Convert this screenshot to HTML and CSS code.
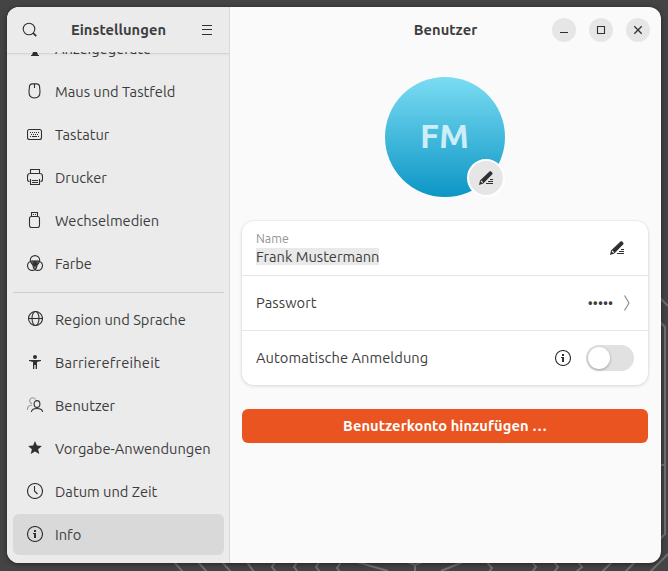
FILE: index.html
```html
<!DOCTYPE html>
<html lang="de">
<head>
<meta charset="utf-8">
<title>Einstellungen</title>
<link rel="stylesheet" href="styles.css">
</head>
<body>
<svg class="wallpaper" viewBox="0 0 668 571"><path d="M174 562l9 10M198 562l9 10M222 562l9 10M247 562l7 10M275 562l-3 5 4 5M297 562l-3 5 4 5M319 562l-3 5 4 5M341 562l-4 6 3 4M357 562l31 9M407 562l8 3 8-3M415 565v7M463 562l-22 9M487 562l5 6-3 4M532 562l4 5-4 5M554 562l4 5-4 5M578 562l4 5-6 5M612 562l-10 10M635 562l-10 10M668 554l-18 18M660 298l8 8M660 322l5 5v207l-5 5M660 465h5"/></svg>
<div class="window">
  <aside class="sidebar">
    <header class="side-header">
      <svg class="icon" viewBox="0 0 16 16"><circle cx="7" cy="7" r="5.8"/><path d="M11.2 11.2l3 3" stroke-width="1.7"/></svg>
      <h1 class="title">Einstellungen</h1>
      <svg class="icon menu" viewBox="0 0 16 16"><path d="M3 3.500h10M3 7.500h10M3 12.500h10"/></svg>
    </header>
    <nav class="list">
      <a class="row"><svg class="icon" viewBox="0 0 16 16"><rect x="1" y="1" width="14" height="9"/><path class="fill" d="M6 12h4l1 3h1v1H4v-1h1z"/></svg><span>Anzeigegeräte</span></a>
      <a class="row"><svg class="icon" viewBox="0 0 16 16"><path d="M5.200.9h4.600Q12 .9 12.500 3.200L13 8.500Q13.200 15 7.500 15T2 8.500L2.500 3.200Q3 .9 5.200 .9zM7.500 1v4"/></svg><span>Maus und Tastfeld</span></a>
      <a class="row"><svg class="icon" viewBox="0 0 16 16"><rect x=".5" y="3.500" width="14" height="10" rx="2"/><path class="dotted" d="M3 6.500h10M4 8.500h8"/><path d="M3 10.500h1M5 10.500h5M11 10.500h1"/></svg><span>Tastatur</span></a>
      <a class="row"><svg class="icon" viewBox="0 0 16 16"><path d="M3.500 4.500v-4h9v4M2.500 12.500Q.5 12.500 .5 10.500v-3Q.5 4.500 3 4.500h10q2.500 0 2.500 3v3q0 2-2 2M3.500 10v5.500h9V10M5 11.500h6M5 13.500h6"/></svg><span>Drucker</span></a>
      <a class="row"><svg class="icon" viewBox="0 0 16 16"><rect x="2.500" y="4.500" width="10" height="11" rx="2"/><path d="M4.500 4V.5h6V4M6 2.500h1M8 2.500h1"/></svg><span>Wechselmedien</span></a>
      <a class="row"><svg class="icon" viewBox="0 0 16 16"><path class="fill mid" d="M3.500 6Q8 4 12.500 6L11 10 8 14 5 10z"/><path class="fill" d="M5 7.500h6L8 12z"/><circle cx="8" cy="5.300" r="4.700"/><circle cx="5.200" cy="10.700" r="4.700"/><circle cx="10.800" cy="10.700" r="4.700"/></svg><span>Farbe</span></a>
      <hr class="separator">
      <a class="row"><svg class="icon" viewBox="0 0 16 16"><circle cx="8.500" cy="7.500" r="7"/><ellipse cx="8.500" cy="7.500" rx="3.500" ry="7"/><path d="M1 7.500h15"/></svg><span>Region und Sprache</span></a>
      <a class="row"><svg class="icon" viewBox="0 0 16 16"><path class="fill" d="M2 6h12v1l-4 1v7H8.700v-4H7.300v4H6V8L2 7z"/><circle class="fill" cx="8" cy="3" r="2"/></svg><span class="wide">Barrierefreiheit</span></a>
      <a class="row"><svg class="icon" viewBox="0 0 16 16"><g class="faint"><path d="M8.500 2.500A3 3 0 1 0 5 6.600M.5 13v-1.500Q1 8.500 5 8"/></g><ellipse cx="10" cy="7" rx="2.900" ry="3.400"/><path d="M4.500 15v-.5Q5 11.500 10 11.500t5.500 3V15"/></svg><span>Benutzer</span></a>
      <a class="row"><svg class="icon" viewBox="0 0 16 16"><path class="fill" d="M8 1l1.900 4.600 5 .4-3.800 3.200L12.300 14 8 11.400 3.700 14l1.200-4.800L1.100 6l5-.4z"/></svg><span>Vorgabe-Anwendungen</span></a>
      <a class="row"><svg class="icon" viewBox="0 0 16 16"><circle cx="8" cy="8" r="7.500"/><path d="M7.500 3v5l3 3"/></svg><span>Datum und Zeit</span></a>
      <a class="row selected"><svg class="icon" viewBox="0 0 16 16"><circle cx="8" cy="8" r="7.500"/><path class="fill" d="M7 4h2v2H7zM6 7h3v5H7V8H6z"/></svg><span>Info</span></a>
    </nav>
  </aside>
  <main class="content">
    <header class="main-header">
      <h2 class="title">Benutzer</h2>
      <div class="controls">
        <button class="control"><svg class="icon" viewBox="0 0 16 16"><path d="M4 10.500h8"/></svg></button>
        <button class="control"><svg class="icon" viewBox="0 0 16 16"><path d="M4.500 4.500h7v7h-7z"/></svg></button>
        <button class="control"><svg class="icon" viewBox="0 0 16 16"><path d="M4.300 4.300l7.400 7.400M11.700 4.300l-7.400 7.400" stroke-width="1.300"/></svg></button>
      </div>
    </header>
    <div class="avatar"><span class="initials">FM</span>
      <button class="avatar-edit"><svg class="icon" viewBox="0 0 16 16"><path class="fill" d="M1 15l1-4.500L11.500 1.500q.8-.8 1.500 0l1.300 1.300q.7.700 0 1.500L5.300 13.500z"/><path d="M12 9.500h3M10 11.500h5M8 13.500h7"/><path class="tip" d="M3 11l1.700 1.700"/></svg></button>
    </div>
    <section class="card">
      <div class="setting">
        <div class="name"><span class="caption">Name</span><span class="value">Frank Mustermann</span></div>
        <svg class="icon edit" viewBox="0 0 16 16"><path class="fill" d="M1 15l1-4.500L11.500 1.500q.8-.8 1.500 0l1.300 1.300q.7.700 0 1.500L5.300 13.500z"/><path d="M12 9.500h3M10 11.500h5M8 13.500h7"/><path class="tip light" d="M3 11l1.700 1.700"/></svg>
      </div>
      <div class="setting"><span class="label">Passwort</span><span class="dots">•••••</span><svg class="icon chevron" viewBox="0 0 16 16"><path d="M5.500.5l4.500 7.500-4.500 7.500"/></svg></div>
      <div class="setting"><span class="label">Automatische Anmeldung</span><svg class="icon info" viewBox="0 0 16 16"><circle cx="8" cy="8" r="7.500"/><path class="fill" d="M7 4h2v2H7zM6 7h3v5H7V8H6z"/></svg><span class="switch"><span class="knob"></span></span></div>
    </section>
    <button class="add">Benutzerkonto hinzufügen …</button>
  </main>
</div>
</body>
</html>
```
FILE: styles.css
```css
* { box-sizing: border-box; }
body {
  margin: 0;
  width: 668px;
  height: 571px;
  padding: 7px;
  overflow: hidden;
  background: #444;
  color: #3d3d3d;
  font: 14.67px/20px Ubuntu, "Noto Sans", sans-serif;
}
.wallpaper { position: absolute; inset: 0; width: 668px; height: 571px; fill: none; stroke: #707070; stroke-width: 2; }
.window {
  position: relative;
  display: flex;
  width: 654px;
  height: 556px;
  border-radius: 12px;
  overflow: hidden;
  background: #fafafa;
  box-shadow: 0 1px 5px rgba(0, 0, 0, .5);
}
button { border: 0; padding: 0; font: inherit; color: inherit; }
.icon { display: block; flex: none; width: 16px; height: 16px; fill: none; stroke: #303030; stroke-width: 1.1; }
.fill { fill: #303030; stroke: none; }
.mid { fill: #777; }
.dotted { stroke-dasharray: 1 1; }
.faint { stroke: #999; }
.tip { stroke: #e6e6e6; }
.tip.light { stroke: #fff; }
.title { margin: 0; font-size: 14.67px; line-height: 20px; font-weight: 700; letter-spacing: .04px; white-space: nowrap; }
.sidebar { display: flex; flex-direction: column; width: 223px; flex: none; background: #ebebeb; border-right: 1px solid #d9d9d9; }
.side-header { position: relative; z-index: 1; display: flex; align-items: center; justify-content: space-between; flex: none; height: 45px; padding: 1px 14px 0 15px; }
.side-header::after { content: ""; position: absolute; inset: 46px 0 auto; height: 1px; background: rgba(0, 0, 0, .09); box-shadow: 0 1px 2px rgba(0, 0, 0, .06); }
.list { display: flex; flex: 1; min-height: 0; flex-direction: column; justify-content: flex-end; gap: 2px; padding: 0 5px 8px 6px; overflow: hidden; }
.row { display: flex; flex: none; align-items: center; height: 41px; padding: 0 14px; gap: 12px; border-radius: 6px; white-space: nowrap; }
.row .icon { margin-bottom: 1px; }
.wide { letter-spacing: .19px; }
.selected { background: #d9d9d9; }
.separator { flex: none; width: 100%; height: 1px; margin: 6px 0 4px; border: 0; background: #ccc; }
.content { flex: 1; min-width: 0; padding: 0 13px 0 12px; }
.main-header { display: grid; grid-template-columns: 1fr auto 1fr; align-items: center; height: 46px; }
.main-header .title { grid-column: 2; padding-left: 1px; }
.controls { display: flex; justify-content: flex-end; gap: 13px; margin-right: -2px; }
.control { display: grid; place-items: center; width: 24px; height: 24px; border-radius: 50%; background: #e6e6e6; }
.avatar { position: relative; display: grid; place-items: center; width: 120px; height: 120px; margin: 24px auto 24px; border-radius: 50%; background: linear-gradient(#7bdcf3, #0c96c5); }
.initials { padding: 0 1px 2px 0; color: #cdeef6; font-size: 33.6px; line-height: 40px; font-weight: 600; }
.avatar-edit { position: absolute; left: 82px; top: 82px; display: grid; place-items: center; width: 38px; height: 38px; border: 2px solid #fff; border-radius: 50%; background: #e6e6e6; }
.card { height: 164px; border-radius: 12px; background: #fff; box-shadow: 0 0 0 1px rgba(0, 0, 0, .03), 0 1px 3px 1px rgba(0, 0, 0, .08); }
.setting { display: flex; align-items: center; height: 55px; padding: 0 14px; border-bottom: 1px solid #e6e6e6; white-space: nowrap; }
.setting:last-child { border: 0; height: 54px; }
.name { display: flex; flex-direction: column; align-items: flex-start; margin-right: auto; padding-bottom: 2px; }
.caption { color: #939393; font-size: 12.4px; line-height: 19px; }
.value { background: #e9e9e9; line-height: 17px; }
.edit { margin-right: 9px; }
.label { margin-right: auto; letter-spacing: .06px; }
.dots { font-size: 14px; }
.chevron { margin: 0 -1px 0 6px; stroke: #888; }
.info { margin-right: 15px; }
.switch { width: 48px; height: 26px; padding: 2px; border-radius: 13px; background: #e1e1e1; }
.knob { display: block; width: 22px; height: 22px; border-radius: 50%; background: #fff; box-shadow: 0 1px 3px rgba(0, 0, 0, .3); }
.add { display: block; width: 406px; height: 34px; margin-top: 24px; border-radius: 6px; background: #e95420; color: #fff; font-weight: 600; letter-spacing: .07px; }
```
